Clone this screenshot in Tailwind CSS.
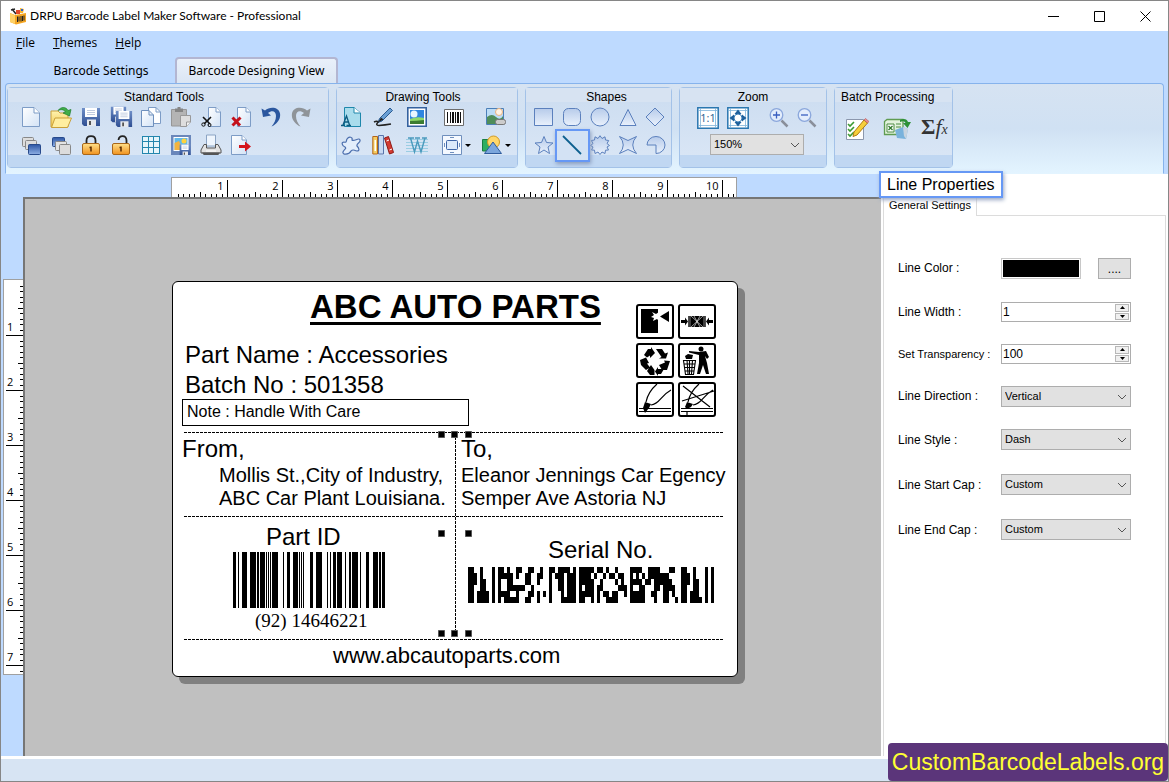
<!DOCTYPE html>
<html lang="en">
<head>
  <meta charset="UTF-8">
  <meta name="viewport" content="width=device-width, initial-scale=1.0">
  <title>DRPU Barcode Label Maker Software - Professional</title>
  <script src="https://cdn.jsdelivr.net/npm/@tailwindcss/browser@4"></script>
</head>
<body class="h-screen overflow-hidden font-['Liberation_Sans',Arial,sans-serif] text-xs text-black">

  <!-- Shared gradients and symbols -->
  <svg class="absolute w-0 h-0" aria-hidden="true">
    <defs>
      <linearGradient id="gPage" x1="0" y1="0" x2="1" y2="1"><stop offset="0" stop-color="#fff"/><stop offset="1" stop-color="#d3e3f6"/></linearGradient>
      <linearGradient id="gShape" x1="0" y1="0" x2="0" y2="1"><stop offset="0" stop-color="#b7cbea"/><stop offset="1" stop-color="#e9f1fc"/></linearGradient>
      <linearGradient id="gDisk" x1="0" y1="0" x2="0" y2="1"><stop offset="0" stop-color="#6f8fc8"/><stop offset="1" stop-color="#2e4e92"/></linearGradient>
      <linearGradient id="gLock" x1="0" y1="0" x2="0" y2="1"><stop offset="0" stop-color="#ffe08a"/><stop offset="1" stop-color="#f0921e"/></linearGradient>
      <linearGradient id="gFolder" x1="0" y1="0" x2="0" y2="1"><stop offset="0" stop-color="#fff3b0"/><stop offset="1" stop-color="#f3c94e"/></linearGradient>
      <linearGradient id="gBlue" x1="0" y1="0" x2="0" y2="1"><stop offset="0" stop-color="#2c55a4"/><stop offset="1" stop-color="#8fb0e4"/></linearGradient>
      <symbol id="page" viewBox="0 0 20 20"><path d="M1.500 .5H13L18.500 6V19.500H1.500Z" fill="url(#gPage)" stroke="#7d9cc6"/><path d="M13 .5V6H18.500" fill="#fff" stroke="#7d9cc6"/></symbol>
      <symbol id="disk" viewBox="0 0 20 20"><path d="M1 1H19V19H3L1 17Z" fill="url(#gDisk)"/><path d="M4 1H16V10H4Z" fill="#fff"/><path d="M6 3.500H14M6 5.500H14M6 7.500H14" stroke="#c0cbe0"/><path d="M6 12.500H15V19H6Z" fill="#e6e9ee"/><path d="M8 14H10V18H8Z" fill="#555"/></symbol>
      <symbol id="chev" viewBox="0 0 10 6"><path d="M1 1L5 5L9 1" fill="none" stroke="#555"/></symbol>
    </defs>
  </svg>

  <div class="relative flex h-full flex-col border border-[#868686] bg-[#bedaff]">

    <!-- Title bar -->
    <header class="flex h-[30px] shrink-0 items-center bg-white pl-2 font-[Lato,'Open_Sans',sans-serif]">
      <svg class="h-[18px] w-[18px]" viewBox="0 0 18 18">
        <path d="M1 6L6 8L17 6V15L7 17.500L1 15Z" fill="#f5a623"/><path d="M1 6L6 8.500V17L1 15Z" fill="#ffd166"/>
        <path d="M3 2L7 7M2 3L6 2" stroke="#222" stroke-width="1.500"/><path d="M7 3H11V7H7Z" fill="#e14a2a"/><path d="M11 1L15 2L14 6H11Z" fill="#f7b733"/><path d="M12 2H14V4H12Z" fill="#2f5ecb"/>
        <path d="M8.500 9.500V15M10 9.500V14.500M12 9V14.500M13.500 9V14M15 8.500V13.500" stroke="#222"/>
      </svg>
      <h1 class="ml-[3px] flex-1">DRPU Barcode Label Maker Software - Professional</h1>
      <button type="button" aria-label="Minimize" class="flex h-full w-[46px] items-center justify-center"><svg class="h-[11px] w-[11px]" viewBox="0 0 11 11"><path d="M0 5.500H11" stroke="#000"/></svg></button>
      <button type="button" aria-label="Maximize" class="flex h-full w-[46px] items-center justify-center"><svg class="h-[11px] w-[11px]" viewBox="0 0 11 11"><path d="M.5 .5H10.500V10.500H.5Z" fill="none" stroke="#000"/></svg></button>
      <button type="button" aria-label="Close" class="flex h-full w-[46px] items-center justify-center"><svg class="h-[11px] w-[11px]" viewBox="0 0 11 11"><path d="M.5 .5L10.500 10.500M10.500 .5L.5 10.500" stroke="#000"/></svg></button>
    </header>

    <!-- Menu -->
    <nav class="flex h-6 shrink-0 items-center gap-[18px] pl-[15px] font-['Open_Sans',sans-serif]">
      <button type="button"><u>F</u>ile</button>
      <button type="button"><u>T</u>hemes</button>
      <button type="button"><u>H</u>elp</button>
    </nav>

    <!-- Tabs -->
    <div class="flex h-7 shrink-0 items-end pl-[26px] font-['Noto_Sans','Open_Sans',sans-serif]" role="tablist">
      <button type="button" role="tab" class="h-[25px] w-[148px]">Barcode Settings</button>
      <button type="button" role="tab" aria-selected="true" class="relative z-10 h-[26px] w-[163px] rounded-t border-2 border-b-0 border-[#b3b6d2] bg-gradient-to-b from-[#e9f0fa] to-[#dbe6f4]">Barcode Designing View</button>
    </div>

    <!-- Ribbon -->
    <div class="mx-1 flex h-[91px] shrink-0 gap-[7px] rounded-t border border-[#86b3ec] border-b-[#e3f4ff] bg-gradient-to-b from-[#d6e3f2] via-[#d0e1f3] to-[#e3f4ff] px-px py-[3px]">

      <section class="flex h-[81px] w-[322px] flex-col rounded border border-[#a3c2e8] bg-gradient-to-b from-[#cbdcf0] to-[#dbe7f6]">
        <h2 class="h-[14px] bg-[#d7e3f2] pr-2 text-center leading-[18px]">Standard Tools</h2>
        <div class="grid flex-1 grid-cols-[repeat(10,30px)] grid-rows-[20px_20px] content-center items-center justify-items-center gap-y-2 pl-2 pt-[5px]">
          <button type="button" aria-label="New"><svg class="h-5 w-5"><use href="#page"/></svg></button>
          <button type="button" aria-label="Open"><svg class="h-[22px] w-[22px]" viewBox="0 0 22 22"><path d="M1 5H8L10 7H18V21H1Z" fill="url(#gFolder)" stroke="#c9a03a"/><path d="M5 12H21.500L17.500 21.500H1.500Z" fill="#ffeea0" stroke="#c9a03a"/><path d="M8 4.500C11 .5 16 .5 18 4.500L21 3.500L19.500 10L13 7L15.500 6C14 3.500 11 3 8 4.500Z" fill="#3fae49" stroke="#1f7d2c" stroke-width=".7"/></svg></button>
          <button type="button" aria-label="Save"><svg class="h-5 w-5"><use href="#disk"/></svg></button>
          <button type="button" aria-label="Save as"><svg class="h-[22px] w-[23px]" viewBox="0 0 23 22"><use href="#disk" width="17" height="17"/><use href="#disk" x="5" y="4" width="18" height="18"/></svg></button>
          <button type="button" aria-label="Copy"><svg class="h-5 w-5" viewBox="0 0 20 20"><path d="M7.500 .5H15L19.500 5V16.500H7.500Z" fill="#fff" stroke="#7d9cc6"/><path d="M15 .5V5H19.500" fill="none" stroke="#7d9cc6"/><path d="M.5 3.500H8L12.500 8V19.500H.5Z" fill="url(#gPage)" stroke="#6f90bd"/><path d="M8 3.500V8H12.500" fill="none" stroke="#6f90bd"/></svg></button>
          <button type="button" aria-label="Paste"><svg class="h-5 w-5" viewBox="0 0 20 20"><path d="M.5 2.500H15.500V19H.5Z" fill="#b4b4b4" stroke="#969696"/><path d="M4 1.500H6.500V0H9.500V1.500H12V5H4Z" fill="#858585"/><path d="M9.500 8.500H19.500V15L15.500 19.500H9.500Z" fill="#dedede" stroke="#999"/><path d="M15.500 19.500V15H19.500" fill="#f4f4f4" stroke="#999"/></svg></button>
          <button type="button" aria-label="Cut"><svg class="h-5 w-5" viewBox="0 0 20 20"><path d="M7.500 .5H15L19.500 5V19.500H7.500Z" fill="url(#gPage)" stroke="#7d9cc6"/><path d="M15 .5V5H19.500" fill="#fff" stroke="#7d9cc6"/><path d="M2 10L9 17M10 10L3 17" stroke="#111" stroke-width="1.600"/><circle cx="2.500" cy="17.500" r="1.700" fill="none" stroke="#111"/><circle cx="8.500" cy="18" r="1.500" fill="none" stroke="#111"/></svg></button>
          <button type="button" aria-label="Delete"><svg class="h-5 w-5" viewBox="0 0 20 20"><path d="M6.500 .5H15L19.500 5V19.500H6.500Z" fill="url(#gPage)" stroke="#7d9cc6"/><path d="M15 .5V5H19.500" fill="#fff" stroke="#7d9cc6"/><path d="M1.500 10.500L9 18.500M9.500 10.500L1.500 18.500" stroke="#c4101a" stroke-width="3"/></svg></button>
          <button type="button" aria-label="Undo"><svg class="h-5 w-5" viewBox="0 0 20 20"><path d="M.5 1.500L2 10L10 8.500L7 6C11 3 15 4 15 9C15 13 13 16.500 10.500 19.500C16 17 20 12 19 6.500C18 0 9 -1 4 3.500Z" fill="#2b579f"/></svg></button>
          <button type="button" aria-label="Redo"><svg class="h-5 w-5" viewBox="0 0 20 20"><path d="M19.500 1.500L18 10L10 8.500L13 6C9 3 5 4 5 9C5 13 7 16.500 9.500 19.500C4 17 0 12 1 6.500C2 0 11 -1 16 3.500Z" fill="#8f9499"/></svg></button>

          <button type="button" aria-label="Bring to front"><svg class="h-5 w-5" viewBox="0 0 20 20"><rect x="1.500" y="2.500" width="11" height="9" rx="1" fill="#ddd" stroke="#888"/><rect x="4.500" y="5.500" width="11" height="9" rx="1" fill="#ddd" stroke="#888"/><rect x="7.500" y="9.500" width="12" height="10" rx="1" fill="url(#gBlue)" stroke="#274a8c"/></svg></button>
          <button type="button" aria-label="Send to back"><svg class="h-5 w-5" viewBox="0 0 20 20"><rect x="1.500" y="2.500" width="12" height="9" rx="1" fill="url(#gBlue)" stroke="#274a8c"/><rect x="4.500" y="6.500" width="11" height="9" rx="1" fill="#e4e4e4" stroke="#888"/><rect x="8.500" y="9.500" width="11" height="10" rx="1" fill="#dcdcdc" stroke="#888"/></svg></button>
          <button type="button" aria-label="Lock"><svg class="h-5 w-5" viewBox="0 0 20 20"><path d="M5.500 9V5.500Q5.500 1.200 10 1.200T14.500 5.500V9" fill="none" stroke="#222" stroke-width="1.800"/><rect x="1.500" y="8.500" width="17" height="11" rx="1.500" fill="url(#gLock)" stroke="#a8661a"/><path d="M10 11.500V16.500M8.500 12.500H10" stroke="#5b2b00" stroke-width="1.500"/></svg></button>
          <button type="button" aria-label="Unlock"><svg class="h-5 w-5" viewBox="0 0 20 20"><path d="M15.500 9V5.500Q15.500 1.200 11.500 1.200Q8 1.200 7.500 5" fill="none" stroke="#222" stroke-width="1.800"/><rect x="1.500" y="8.500" width="17" height="11" rx="1.500" fill="url(#gLock)" stroke="#a8661a"/><path d="M10 11.500V16.500M8.500 12.500H10" stroke="#5b2b00" stroke-width="1.500"/></svg></button>
          <button type="button" aria-label="Grid"><svg class="h-5 w-5" viewBox="0 0 20 20"><path d="M1.500 1.500H18.500V18.500H1.500Z" fill="#e6f5fb"/><path d="M1.500 1V19M7.500 1V19M12.500 1V19M18.500 1V19M1 1.500H19M1 6.500H19M1 12.500H19M1 18.500H19" stroke="#2386ad"/></svg></button>
          <button type="button" aria-label="Export image"><svg class="h-[22px] w-5" viewBox="0 0 20 22"><path d="M0 1H20V21H0Z" fill="#6a87bb"/><path d="M2.500 3H17.500V17H2.500Z" fill="#fff"/><path d="M3.500 4H16.500V16H3.500Z" fill="#63b8e8"/><circle cx="13" cy="7" r="2.500" fill="#ffd23a"/><path d="M3.500 9L8 7L12 16H3.500Z" fill="#f3b33d"/><use href="#disk" x="8" y="10" width="12" height="12"/></svg></button>
          <button type="button" aria-label="Print"><svg class="h-[22px] w-[22px]" viewBox="0 0 22 22"><path d="M6.500 1H15.500V12H6.500Z" fill="#eef5fd" stroke="#8ba4c4"/><path d="M4 10.500H6.500V14H15.500V10.500H18L21 16V19H1V16Z" fill="#e2e2e2" stroke="#555"/><path d="M2 18.500H20L18 21.500H4Z" fill="#555"/><path d="M6 17H16" stroke="#fff"/></svg></button>
          <button type="button" aria-label="Exit"><svg class="h-5 w-5" viewBox="0 0 20 20"><path d="M.5 .5H11L15.500 5V19.500H.5Z" fill="url(#gPage)" stroke="#7d9cc6"/><path d="M11 .5V5H15.500" fill="#fff" stroke="#7d9cc6"/><path d="M8 10H14V6.500L20 11.500L14 16.500V13H8Z" fill="#d4151c"/></svg></button>
        </div>
        <div class="h-[12px] bg-[#c0d7f2]"></div>
      </section>

      <section class="flex h-[81px] w-[182px] flex-col rounded border border-[#a3c2e8] bg-gradient-to-b from-[#cbdcf0] to-[#dbe7f6]">
        <h2 class="h-[14px] bg-[#d7e3f2] pr-2 text-center leading-[18px]">Drawing Tools</h2>
        <div class="grid flex-1 grid-cols-[28px_35px_34px_44px_36px] grid-rows-[20px_20px] content-center items-center justify-items-center gap-y-2 pt-[5px]">
          <button type="button" aria-label="Text"><svg class="h-5 w-5" viewBox="0 0 20 20"><path d="M3.500 .5H13L19.500 6V19.500H3.500Z" fill="#a9dcec" stroke="#1e87ab"/><path d="M13 .5V6H19.500" fill="#fff" stroke="#1e87ab"/><path d="M0 18.500H4M5.500 18.500H10M2 18L5.500 9L8.500 18M3 15H7.500" fill="none" stroke="#0d5a80" stroke-width="1.300"/></svg></button>
          <button type="button" aria-label="Pencil"><svg class="h-5 w-5" viewBox="0 0 20 20"><path d="M17 1L19.500 3.500L9 14L5 15.500L6.500 11.500Z" fill="#6a9fd4" stroke="#2c5c92"/><path d="M5 15.500L8 10.500L10.500 12.500Z" fill="#222"/><path d="M1 15Q4 13.500 5 15Q2 18.500 6 18.500Q12 18 18 17" fill="none" stroke="#222" stroke-width="1.600"/></svg></button>
          <button type="button" aria-label="Picture"><svg class="h-5 w-5" viewBox="0 0 20 20"><path d="M.8 .8H19.200V19.200H.8Z" fill="#fff" stroke="#34619f" stroke-width="1.600"/><path d="M3 3H17V17H3Z" fill="#2f86e0"/><circle cx="7" cy="7" r="3.500" fill="#e8f6ff"/><path d="M3 12Q10 9 17 11V17H3Z" fill="#8ed86a"/><path d="M3 14Q9 14 17 13V17H3Z" fill="#3b7c31"/></svg></button>
          <button type="button" aria-label="Barcode" class="mr-1"><svg class="h-[17px] w-5" viewBox="0 0 20 17"><path d="M.5 .5H19.500V16.500H.5Z" fill="#fff" stroke="#6c6c6c"/><path d="M3.500 3V14M6.500 3V14M11.500 3V14M16.500 3V14" stroke="#111"/><path d="M9 3V14M14 3V14" stroke="#111" stroke-width="2"/></svg></button>
          <button type="button" aria-label="Watermark"><svg class="h-5 w-5" viewBox="0 0 20 20"><path d="M.5 1.500H17.500V17.500H.5Z" fill="#bcdcf6" stroke="#4b7fb8"/><path d="M1 10Q6 6 10 10T17 9V17H1Z" fill="#4f8e5a"/><circle cx="13" cy="5" r="3.500" fill="#fff3e4" stroke="#eab27d"/><rect x="9.500" y="12.500" width="10" height="5" rx="2" fill="#ccc" stroke="#777"/></svg></button>

          <button type="button" aria-label="Freeform"><svg class="h-5 w-5" viewBox="0 0 20 20"><path d="M6 4C8 1 12 2 11 5C13 7 18 2 19 5C20 8 15 8 16 11C18 13 19 16 16 16C12 15 12 14 10 16C8 20 1 20 2 17C3 14 6 14 4 12C1 11 0 7 3 7C6 8 5 6 6 4Z" fill="#e3eefc" stroke="#4c6fae" stroke-width="1.200"/></svg></button>
          <button type="button" aria-label="Library"><svg class="h-5 w-[22px]" viewBox="0 0 22 20"><path d="M.8 1.500H5.500V19H.8Z" fill="#f6cf62" stroke="#b3641b"/><path d="M2.500 5H4V16H2.500Z" fill="#fff"/><path d="M6.500 .5H11.500V19H6.500Z" fill="#c9d9f2" stroke="#5874ab"/><path d="M12.500 3L16.500 1.500L21.500 17.500L17.500 19Z" fill="#d43a31" stroke="#8e1a16"/><path d="M14.500 6L17 5M17.500 15L20 14" stroke="#fff"/></svg></button>
          <button type="button" aria-label="Word art"><svg class="h-5 w-[22px]" viewBox="0 0 22 20"><path d="M0 4.500H22M0 7.500H22M0 10.500H22M0 13.500H22M0 16.500H22" stroke="#8cc6de" stroke-width=".8"/><path d="M2 3H8M9 3H14M16 3H21M4.500 3L8.500 17L11.500 6L15 17L19 3" fill="none" stroke="#4b9abd" stroke-width="1.400"/></svg></button>
          <button type="button" aria-label="Label frame" class="flex items-center gap-[3px]"><svg class="h-5 w-5" viewBox="0 0 20 20"><path d="M.5 .5H19.500V19.500H.5Z" fill="#f5f9ff" stroke="#6f8fbd"/><rect x="4.500" y="5.500" width="11" height="9" rx="1" fill="#dceafb" stroke="#3f66a8"/><path d="M8 2.500H12M8 17.500H12M2.500 8V12M17.500 8V12" stroke="#6f8fbd"/></svg><svg class="h-[3px] w-[6px]" viewBox="0 0 6 3"><path d="M0 0H6L3 3Z"/></svg></button>
          <button type="button" aria-label="Insert shape" class="flex items-center gap-[3px]"><svg class="h-5 w-5" viewBox="0 0 20 20"><path d="M.5 4.500H9V16H.5Z" fill="#2fae62" stroke="#1a7d40"/><circle cx="11.500" cy="7" r="6" fill="#ffd76a" stroke="#d19a24"/><path d="M11 7L19.500 18.500H2.500Z" fill="#7ba6dc" stroke="#2f5c9d"/></svg><svg class="h-[3px] w-[6px]" viewBox="0 0 6 3"><path d="M0 0H6L3 3Z"/></svg></button>
        </div>
        <div class="h-[12px] bg-[#c0d7f2]"></div>
      </section>

      <section class="flex h-[81px] w-[147px] flex-col rounded border border-[#a3c2e8] bg-gradient-to-b from-[#cbdcf0] to-[#dbe7f6]">
        <h2 class="h-[14px] bg-[#d7e3f2] pl-4 text-center leading-[18px]">Shapes</h2>
        <div class="grid flex-1 grid-cols-[repeat(5,28px)] grid-rows-[20px_20px] content-center items-center justify-items-center gap-y-2 pl-1 pt-[5px]">
          <button type="button" aria-label="Rectangle"><svg class="h-5 w-5" viewBox="0 0 20 20"><path d="M.5 1.500H18.500V18.500H.5Z" fill="url(#gShape)" stroke="#5b80bd"/></svg></button>
          <button type="button" aria-label="Rounded rectangle"><svg class="h-5 w-5" viewBox="0 0 20 20"><rect x="1.500" y="1.500" width="17" height="17" rx="5" fill="url(#gShape)" stroke="#5b80bd"/></svg></button>
          <button type="button" aria-label="Ellipse"><svg class="h-5 w-5" viewBox="0 0 20 20"><circle cx="10" cy="10" r="9" fill="url(#gShape)" stroke="#5b80bd"/></svg></button>
          <button type="button" aria-label="Triangle"><svg class="h-5 w-5" viewBox="0 0 20 20"><path d="M10 2.500L18 18.500H2Z" fill="url(#gShape)" stroke="#5b80bd"/></svg></button>
          <button type="button" aria-label="Diamond"><svg class="h-5 w-5" viewBox="0 0 20 20"><path d="M9 1L18 10L9 19L0 10Z" fill="url(#gShape)" stroke="#5b80bd"/></svg></button>

          <button type="button" aria-label="Star"><svg class="h-5 w-5" viewBox="0 0 20 20"><path d="M10 1.500L12.500 7.500L19 8L14 12L15.500 18.500L10 15L4.500 18.500L6 12L1 8L7.500 7.500Z" fill="url(#gShape)" stroke="#5b80bd"/></svg></button>
          <button type="button" aria-label="Line" aria-pressed="true" class="relative z-10 flex h-[33px] w-[35px] items-center justify-center border-2 border-[#6698f5] bg-[#d3e2f4] shadow-[1px_2px_4px_#8a9cbc]"><svg class="h-5 w-5" viewBox="0 0 20 20"><path d="M1 1L19 19" stroke="#0c5f8f" stroke-width="1.800"/></svg></button>
          <button type="button" aria-label="Burst"><svg class="h-5 w-5" viewBox="0 0 20 20"><path d="M10 .7L12 3.500L15 1.800L15.500 5L18.700 5.500L17 8.500L19.500 10.500L17 12L18.500 15L15.500 15.200L15 18.500L12 17L10 19.500L8 17L5 18.500L4.500 15.200L1.500 15L3 12L.5 10.500L3 8.500L1.300 5.500L4.500 5L5 1.800L8 3.500Z" fill="url(#gShape)" stroke="#5b80bd"/></svg></button>
          <button type="button" aria-label="Four point star"><svg class="h-5 w-5" viewBox="0 0 20 20"><path d="M1.500 1.500L10 5.500L18.500 1.500Q11 10 18.500 18.500L10 14.500L1.500 18.500Q9 10 1.500 1.500Z" fill="url(#gShape)" stroke="#5b80bd"/></svg></button>
          <button type="button" aria-label="Pie"><svg class="h-5 w-5" viewBox="0 0 20 20"><path d="M1 10A9 8.500 0 1 1 10 18.500V10Z" fill="url(#gShape)" stroke="#5b80bd"/></svg></button>
        </div>
        <div class="h-[12px] bg-[#c0d7f2]"></div>
      </section>

      <section class="flex h-[81px] w-[148px] flex-col rounded border border-[#a3c2e8] bg-gradient-to-b from-[#cbdcf0] to-[#dbe7f6]">
        <h2 class="h-[14px] bg-[#d7e3f2] text-center leading-[18px]">Zoom</h2>
        <div class="flex flex-1 flex-col items-center justify-center gap-[5px] pt-[5px]">
          <div class="flex items-center pl-2">
            <button type="button" aria-label="Actual size"><svg class="h-[22px] w-[22px]" viewBox="0 0 22 22"><path d="M.8 .8H21.200V21.200H.8Z" fill="#fff" stroke="#2a77b0" stroke-width="1.500"/><path d="M3.500 1V21M18.500 1V21M1 3.500H21M1 18.500H21" stroke="#7db4da" stroke-width=".8"/><text x="11" y="15" text-anchor="middle" font-size="11" fill="#1d5c8f" font-family="Open Sans, sans-serif">1:1</text></svg></button>
            <button type="button" aria-label="Fit to window" class="ml-2 mr-5"><svg class="h-[22px] w-[22px]" viewBox="0 0 22 22"><path d="M.8 .8H21.200V21.200H.8Z" fill="#fff" stroke="#2a77b0" stroke-width="1.500"/><path d="M3.500 1V21M18.500 1V21M1 3.500H21M1 18.500H21" stroke="#7db4da" stroke-width=".8"/><path d="M11 2.500L14.500 7H7.500ZM11 19.500L14.500 15H7.500ZM2.500 11L7 7.500V14.500ZM19.500 11L15 7.500V14.500Z" fill="#1d5f9a"/><circle cx="11" cy="11" r="4" fill="none" stroke="#3a7db6"/></svg></button>
            <button type="button" aria-label="Zoom in"><svg class="h-5 w-5" viewBox="0 0 20 20"><path d="M12.500 12.500L18.500 18.500" stroke="#8a8f9a" stroke-width="2.500"/><circle cx="7.500" cy="7" r="6.300" fill="#e3edfc" stroke="#8ba7dc" stroke-width="1.300"/><path d="M4 7H11M7.500 3.500V10.500" stroke="#3a5fc0" stroke-width="1.300"/></svg></button>
            <button type="button" aria-label="Zoom out" class="ml-2"><svg class="h-5 w-5" viewBox="0 0 20 20"><path d="M12.500 12.500L18.500 18.500" stroke="#8a8f9a" stroke-width="2.500"/><circle cx="7.500" cy="7" r="6.300" fill="#e3edfc" stroke="#8ba7dc" stroke-width="1.300"/><path d="M4 7H11" stroke="#3a5fc0" stroke-width="1.300"/></svg></button>
          </div>
          <div class="relative ml-2 w-[94px]">
            <select aria-label="Zoom level" class="block h-[21px] w-full appearance-none border border-[#adadad] bg-[#e1e1e1] pl-[3px] text-[11px]"><option>150%</option></select>
            <svg class="pointer-events-none absolute right-1 top-2 h-[6px] w-[10px]"><use href="#chev"/></svg>
          </div>
        </div>
        <div class="h-[12px] bg-[#c0d7f2]"></div>
      </section>

      <section class="flex h-[81px] w-[119px] flex-col rounded border border-[#a3c2e8] bg-gradient-to-b from-[#cbdcf0] to-[#dbe7f6]">
        <h2 class="h-[14px] whitespace-nowrap bg-[#d7e3f2] pl-1.5 leading-[18px]">Batch Processing</h2>
        <div class="flex flex-1 items-center gap-[14px] pl-2.5">
          <button type="button" aria-label="Edit list"><svg class="h-[22px] w-6" viewBox="0 0 24 22"><path d="M1.500 1.500H18.500V21.500H1.500Z" fill="#fff" stroke="#8b97ad"/><path d="M3 6L5 8L9 4M3 11L5 13L9 9M3 16L5 18L9 14" fill="none" stroke="#3c9a32" stroke-width="1.600"/><path d="M19 2L22.500 5L12 17L8 18.500L9 14Z" fill="#f6cf3b" stroke="#b07a12"/><path d="M19 2L20.500 .5L24 3.500L22.500 5Z" fill="#ec8f8f" stroke="#b74f4f" stroke-width=".6"/></svg></button>
          <button type="button" aria-label="Import from Excel"><svg class="h-[22px] w-7" viewBox="0 0 28 22"><path d="M1.500 3.500L4 1.500H20V16.500H1.500Z" fill="#e3f3dd" stroke="#5f9c52" stroke-width="1.300"/><path d="M4 6H11V14H4Z" fill="#fff" stroke="#4b8a40"/><path d="M5.500 8L9.500 12M9.500 8L5.500 12" stroke="#2e7a2a" stroke-width="1.300"/><path d="M13 6H18M13 9H18" stroke="#4b8a40"/><path d="M17 2C21 0 24 1 25 4L28 4L24.500 10L20 5L22.500 5C21.500 3 20 2.500 17 4Z" fill="#2c9136"/><path d="M12 12L20 9L25 11L23 21L14 20Z" fill="#79b2dc"/><path d="M20 9L25 11L23 21L21 18Z" fill="#c8d4df"/></svg></button>
          <button type="button" aria-label="Formula" class="-ml-1 flex items-baseline font-['Liberation_Serif',serif] text-[22px] leading-6 text-[#333]"><b>Σ</b><i>f</i><i class="text-sm leading-6">x</i></button>
        </div>
        <div class="h-[12px] bg-[#c0d7f2]"></div>
      </section>
    </div>

    <!-- Work area -->
    <main class="flex min-h-0 flex-1 border-b-[3px] border-white">
      <div class="grid min-w-0 flex-1 grid-cols-[22px_1fr] grid-rows-[23px_1fr]">
        <div></div>
        <div class="flex items-end overflow-hidden pl-[148px]">
          <svg id="rulerX" class="block h-5 w-[566px] shrink-0 border border-b-0 border-[#a0a0a0] bg-white" font-family="Open Sans, sans-serif" font-size="11"></svg>
        </div>
        <div class="pl-[2px] pt-[82px]">
          <svg id="rulerY" class="block h-[396px] w-5 border border-r-0 border-[#a0a0a0] bg-white" font-family="Open Sans, sans-serif" font-size="11"></svg>
        </div>

        <!-- Design canvas -->
        <div class="relative overflow-hidden border-l-2 border-t-2 border-[#767676] bg-[#c0c0c0]">
          <div class="absolute left-[147px] top-[82px] h-[396px] w-[566px] whitespace-nowrap rounded-[6px] border border-black bg-white text-2xl leading-none shadow-[7px_7px_0_#808080]">
            <p class="absolute left-[137px] top-2 text-[33px] font-bold leading-none underline decoration-[3px] underline-offset-4">ABC AUTO PARTS</p>
            <p class="absolute left-3 top-[61px]">Part Name : Accessories</p>
            <p class="absolute left-3 top-[91px]">Batch No : 501358</p>
            <p class="absolute left-[9px] top-[117px] h-[27px] w-[287px] border border-black pl-1 text-base leading-6">Note : Handle With Care</p>

            <svg class="absolute left-0 top-0 h-full w-full" fill="none" stroke="#000">
              <path d="M11 150.500H550M11 234.500H550M11 357.500H550M282.500 151V351" stroke-dasharray="3 1"/>
            </svg>

            <p class="absolute left-[9px] top-[155px]">From,</p>
            <p class="absolute left-[46px] top-[183px] text-xl leading-none">Mollis St.,City of Industry,</p>
            <p class="absolute left-[46px] top-[206px] text-xl leading-none">ABC Car Plant Louisiana.</p>
            <p class="absolute left-[288px] top-[155px]">To,</p>
            <p class="absolute left-[288px] top-[183px] text-xl leading-none">Eleanor Jennings Car Egency</p>
            <p class="absolute left-[288px] top-[206px] text-xl leading-none">Semper Ave Astoria NJ</p>
            <p class="absolute left-[93px] top-[243px]">Part ID</p>
            <svg id="linear" class="absolute left-[60px] top-[270px] h-14 w-[152px]" shape-rendering="crispEdges"></svg>
            <p class="absolute left-[82px] top-[329px] font-['Liberation_Serif',serif] text-[19px] leading-none">(92) 14646221</p>
            <p class="absolute left-[375px] top-[256px]">Serial No.</p>
            <svg id="stacked" class="absolute left-[295px] top-[285px] h-9 w-[246px]" shape-rendering="crispEdges"></svg>
            <p class="absolute left-[160px] top-[363px] text-[22px] leading-none">www.abcautoparts.com</p>

            <!-- Handling symbols -->
            <div class="absolute left-[463px] top-[22px] grid grid-cols-2 gap-x-1 gap-y-[3px]">
              <svg class="h-9 w-[38px]" viewBox="0 0 38 36"><rect x="1" y="1" width="36" height="33" rx="2" fill="#fff" stroke="#000" stroke-width="2"/><path d="M5 5H22V29H5Z"/><path d="M23 8L20 10L16 8L18 11L15 13L18 14L17 17L21 15L23 17Z" fill="#fff"/><path d="M24 12.500L33 7V18Z"/></svg>
              <svg class="h-9 w-[38px]" viewBox="0 0 38 36"><rect x="1" y="1" width="36" height="33" rx="2" fill="#fff" stroke="#000" stroke-width="2"/><path d="M3 16H7V13.500L10 17.500L7 21.500V19H3ZM35 16H31V13.500L28 17.500L31 21.500V19H35Z"/><path d="M13 12H25V23H13Z"/><path d="M12 12V23M26 12V23" stroke="#000" stroke-width="1.500"/><path d="M10.500 12V23M27.500 12V23" stroke="#000" stroke-width=".7"/><path d="M13 12L25 23M25 12L13 23M16 12L22 23M22 12L16 23" stroke="#fff" stroke-width=".6"/></svg>
              <svg class="h-9 w-[38px]" viewBox="0 0 38 36"><rect x="1" y="1" width="36" height="33" rx="2" fill="#fff" stroke="#000" stroke-width="2"/><path d="M8 12L12 6H15V4L19 10L14 15V12.500L11 14.500ZM20 6H26L29 10.500L32 9.500L30 15.500H23L25.500 14ZM34 18L31 27H26L23 22L29 19.500L28 17.500ZM4 17L10 14.500L13 20L11 20.500L14 24.500L10 27L5 22ZM11 28L15 22L18.500 27V32H14ZM19 28.500L22 24V26H28L25 31H22V33Z"/></svg>
              <svg class="h-9 w-[38px]" viewBox="0 0 38 36"><rect x="1" y="1" width="36" height="33" rx="2" fill="#fff" stroke="#000" stroke-width="2"/><circle cx="23" cy="6" r="2.500"/><path d="M11 8L21 9L28 8L31 14L29 16L27 13L29 20L31 31H28L25 22L22 31H19L21 20V12L11 9.500Z"/><path d="M7 13L10 11L15 12L14 16H8Z"/><path d="M5.500 17.500H17.500L15.500 31.500H7.500ZM6 21H17M6.500 24.500H16.500M7 28H16M9 17L10 31M11.500 17V31M14.500 17L13.500 31" fill="none" stroke="#000" stroke-width="1.100"/></svg>
              <svg class="h-9 w-[38px]" viewBox="0 0 38 36"><rect x="1" y="1" width="36" height="33" rx="2" fill="#fff" stroke="#000" stroke-width="2"/><path d="M21 2Q12 10 10 20M15 23C24 22 24 14 35 8" fill="none" stroke="#000" stroke-width="1.200"/><path d="M9 20L15 22L13 26L9 31L7 26Z"/><path d="M3 26.500H35M3 29.500H35" stroke="#000" stroke-width="1.200"/></svg>
              <svg class="h-9 w-[38px]" viewBox="0 0 38 36"><rect x="1" y="1" width="36" height="33" rx="2" fill="#fff" stroke="#000" stroke-width="2"/><path d="M21 2Q12 10 10 20M15 23C24 22 24 14 35 8M5 4L32 25M4 19L36 9" fill="none" stroke="#000" stroke-width="1.200"/><path d="M9 20L15 22L13 25L9 27L7 25Z"/><path d="M3 26.500H35M3 29.500H35M9 30V33" stroke="#000" stroke-width="1.200"/></svg>
            </div>

            <!-- Selection handles of the vertical line -->
            <svg class="absolute left-[265px] top-[149px] h-[206px] w-[34px]" fill="#000" stroke="#555">
              <path d="M.5 .5h6v6h-6ZM13.500 .5h6v6h-6ZM27.500 .5h6v6h-6ZM.5 99.500h6v6h-6ZM27.500 99.500h6v6h-6ZM.5 199.500h6v6h-6ZM13.500 199.500h6v6h-6ZM27.500 199.500h6v6h-6Z"/>
            </svg>
          </div>
        </div>
      </div>

      <!-- Properties panel -->
      <aside class="relative flex w-[287px] shrink-0 flex-col bg-white pl-[2px] pr-[2px] pt-[23px]">
        <h2 class="absolute left-[-2px] top-[-3px] h-[27px] border-2 border-[#6698f5] bg-white px-[6px] text-base leading-6 shadow-[1px_2px_4px_#9aa8c4]">Line Properties</h2>
        <div class="flex h-[19px]">
          <button type="button" class="w-[94px] border-x border-[#dcdcdc] pb-0.5 text-[11px]">General Settings</button>
          <div class="flex-1 border-b border-[#dcdcdc]"></div>
        </div>
        <form class="grid flex-1 grid-cols-[103px_130px] grid-rows-[46px_42px_42px_42px_45px_45px_45px] items-center border-x border-[#dcdcdc] pl-[14px] pt-[29px]">
          <label for="lineColor">Line Color :</label>
          <div class="flex items-center justify-between">
            <button type="button" id="lineColor" aria-label="Line color" class="h-[21px] w-20 border border-[#c8c8c8] bg-white p-px"><span class="block h-full bg-black"></span></button>
            <button type="button" aria-label="Choose color" class="h-[21px] w-[33px] border border-[#adadad] bg-[#e1e1e1] leading-5">....</button>
          </div>

          <label for="lineWidth">Line Width :</label>
          <div class="flex h-5 border border-[#adadad] bg-white">
            <input id="lineWidth" type="text" inputmode="numeric" value="1" class="min-w-0 flex-1 pl-px outline-none">
            <div class="flex w-[15px] flex-col gap-px py-px pr-px">
              <button type="button" aria-label="Increase width" class="flex flex-1 items-center justify-center border border-[#b8b8b8] bg-[#f0f0f0]"><svg class="h-[3px] w-[5px]" viewBox="0 0 5 3"><path d="M0 3H5L2.500 0Z"/></svg></button>
              <button type="button" aria-label="Decrease width" class="flex flex-1 items-center justify-center border border-[#b8b8b8] bg-[#f0f0f0]"><svg class="h-[3px] w-[5px]" viewBox="0 0 5 3"><path d="M0 0H5L2.500 3Z"/></svg></button>
            </div>
          </div>

          <label for="transparency" class="whitespace-nowrap text-[11px]">Set Transparency :</label>
          <div class="flex h-5 border border-[#adadad] bg-white">
            <input id="transparency" type="text" inputmode="numeric" value="100" class="min-w-0 flex-1 pl-px outline-none">
            <div class="flex w-[15px] flex-col gap-px py-px pr-px">
              <button type="button" aria-label="Increase transparency" class="flex flex-1 items-center justify-center border border-[#b8b8b8] bg-[#f0f0f0]"><svg class="h-[3px] w-[5px]" viewBox="0 0 5 3"><path d="M0 3H5L2.500 0Z"/></svg></button>
              <button type="button" aria-label="Decrease transparency" class="flex flex-1 items-center justify-center border border-[#b8b8b8] bg-[#f0f0f0]"><svg class="h-[3px] w-[5px]" viewBox="0 0 5 3"><path d="M0 0H5L2.500 3Z"/></svg></button>
            </div>
          </div>

          <label for="direction">Line Direction :</label>
          <div class="relative">
            <select id="direction" class="block h-[21px] w-full appearance-none border border-[#adadad] bg-[#e1e1e1] pl-[3px] text-[11px]"><option>Vertical</option><option>Horizontal</option></select>
            <svg class="pointer-events-none absolute right-1 top-2 h-[6px] w-[10px]"><use href="#chev"/></svg>
          </div>

          <label for="lineStyle">Line Style :</label>
          <div class="relative">
            <select id="lineStyle" class="block h-[21px] w-full appearance-none border border-[#adadad] bg-[#e1e1e1] pl-[3px] text-[11px]"><option>Dash</option><option>Solid</option></select>
            <svg class="pointer-events-none absolute right-1 top-2 h-[6px] w-[10px]"><use href="#chev"/></svg>
          </div>

          <label for="startCap">Line Start Cap :</label>
          <div class="relative">
            <select id="startCap" class="block h-[21px] w-full appearance-none border border-[#adadad] bg-[#e1e1e1] pl-[3px] text-[11px]"><option>Custom</option></select>
            <svg class="pointer-events-none absolute right-1 top-2 h-[6px] w-[10px]"><use href="#chev"/></svg>
          </div>

          <label for="endCap">Line End Cap :</label>
          <div class="relative">
            <select id="endCap" class="block h-[21px] w-full appearance-none border border-[#adadad] bg-[#e1e1e1] pl-[3px] text-[11px]"><option>Custom</option></select>
            <svg class="pointer-events-none absolute right-1 top-2 h-[6px] w-[10px]"><use href="#chev"/></svg>
          </div>
        </form>
      </aside>
    </main>

    <!-- Status bar -->
    <footer class="h-[22px] shrink-0 bg-[#d7e4f3]"></footer>

    <a href="#" class="absolute bottom-0 right-0 flex h-[38px] w-[280px] items-center justify-center rounded bg-[#5b357a] text-[23px] text-[#ffff33]">CustomBarcodeLabels.org</a>
  </div>

  <script>
    // rulers: one unit = 55px, ten ticks per unit
    function ruler(id, length, vertical) {
      let out = '';
      for (let i = 1; i * 5.5 < length - 3; i++) {
        const p = Math.round(i * 5.5) + 0.5;
        const size = i % 10 === 0 ? 17 : i % 5 === 0 ? 5 : 3;
        out += vertical ? `<path d="M19 ${p}H${19 - size}" stroke="#000"/>` : `<path d="M${p} 19V${19 - size}" stroke="#000"/>`;
        if (i % 10 === 0) {
          out += vertical ? `<text x="3" y="${p - 5}">${i / 10}</text>` : `<text x="${p - 4}" y="12" text-anchor="end">${i / 10}</text>`;
        }
      }
      document.getElementById(id).innerHTML = out;
    }
    ruler('rulerX', 566, false);
    ruler('rulerY', 396, true);

    // linear barcode: [start, width] of each bar
    const bars = [[0,3],[5,1],[9,5],[17,6],[24,2],[27,5],[33,1],[35,1],[37,1],[39,6],[50,1],[54,3],[60,5],[66,1],[68,1],[70,1],[77,3],[83,6],[94,1],[97,1],[100,3],[104,5],[112,1],[116,2],[119,6],[127,1],[133,3],[140,5],[146,2],[149,3]];
    document.getElementById('linear').innerHTML = bars.map(([x, w]) => `<rect x="${x}" width="${w}" height="56"/>`).join('');

    // stacked barcode: six rows of 3x6 modules, 82 columns
    const rows = [
      '##  #   # ## #  ##  ##  #  ## #### # ##### ## #  #    ####  ####   ##  ##  #   # #',
      '### #   # ##### #  ##  ##  # ### ### #### #  # ## ##  # # # #######    ### #   # #',
      '### ##  # #  ##    ##  #   #  ## ### #####  #    # #  #### ## ######   ### ##  # #',
      '##  ##  # #  ######  #     #  ## ### # ### ##     ### #  ##   ## ####  ##  ##  # #',
      '## #### # ####  #   ## # # #   # ### ##### # ## ##  # #####  ##  ## #  ## ###  # #',
      '## #### # # #####  ##  #   #   ##### ##  # #  ####    #####   #  ##  # ## #### # #'
    ];
    document.getElementById('stacked').innerHTML = rows.map((row, y) =>
      [...row].map((c, x) => c === '#' ? `<rect x="${x * 3}" y="${y * 6}" width="3" height="6"/>` : '').join('')).join('');
  </script>
</body>
</html>
